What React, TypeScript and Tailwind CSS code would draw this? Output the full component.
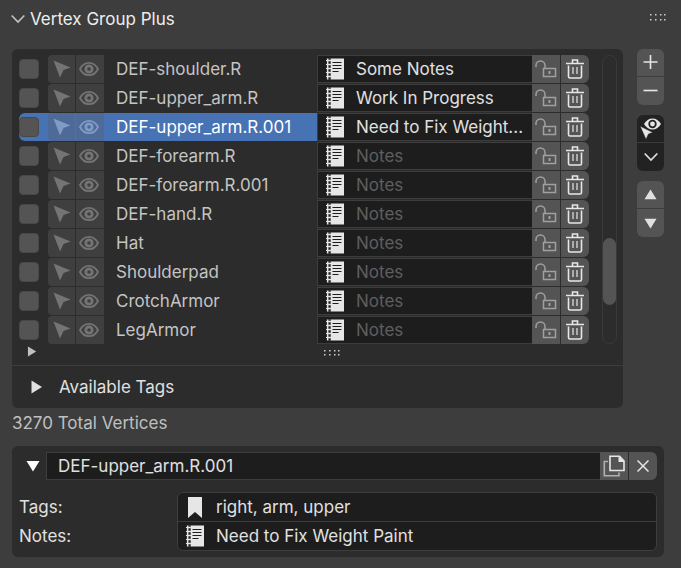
import { useState } from "react";

type Group = { name: string; notes: string };

const GROUPS: Group[] = [
  { name: "DEF-shoulder.R", notes: "Some Notes" },
  { name: "DEF-upper_arm.R", notes: "Work In Progress" },
  { name: "DEF-upper_arm.R.001", notes: "Need to Fix Weight..." },
  { name: "DEF-forearm.R", notes: "" },
  { name: "DEF-forearm.R.001", notes: "" },
  { name: "DEF-hand.R", notes: "" },
  { name: "Hat", notes: "" },
  { name: "Shoulderpad", notes: "" },
  { name: "CrotchArmor", notes: "" },
  { name: "LegArmor", notes: "" },
];

function CursorIcon() {
  return (
    <svg width="18" height="18" viewBox="0 0 18 18" fill="currentColor" aria-hidden="true">
      <path d="M0.500 0.500 17.500 7.500 10.500 10 7 17.500Z" />
    </svg>
  );
}

function EyeIcon() {
  return (
    <svg width="20" height="16" viewBox="0 0 20 16" fill="none" stroke="currentColor" aria-hidden="true">
      <path d="M1 8C3 4 6.300 1.800 10 1.800S17 4 19 8C17 12 13.700 14.200 10 14.200S3 12 1 8Z" strokeWidth="1.800" />
      <circle cx="10" cy="8" r="3.200" strokeWidth="2.800" />
    </svg>
  );
}

function NotesIcon() {
  return (
    <svg className="shrink-0" width="18" height="22" viewBox="0 0 18 22" fill="#e6e6e6" aria-hidden="true">
      <path d="M4.500 0.500H18V21.500H4.500Z" />
      <path d="M1.500 0.500V21.500" stroke="#e6e6e6" strokeWidth="1.200" />
      <path
        d="M0 2.500H5M0 6.500H5M0 10.500H5M0 14.500H5M0 18.500H5M3 0.500V21.500"
        stroke="#e6e6e6"
        strokeWidth="1.200"
        strokeDasharray="none"
      />
      <path d="M3.500 3.500V5.500M3.500 7.500V9.500M3.500 11.500V13.500M3.500 15.500V17.500M3.500 19.500V21.500M3.500 0.500V1.500" stroke="#1d1d1d" strokeWidth="1.600" />
      <path d="M6.500 4.500H15.500M6.500 7.500H15.500M6.500 10.500H15.500M6.500 13.500H12.500" stroke="#1d1d1d" strokeWidth="1.200" />
    </svg>
  );
}

function UnlockIcon() {
  return (
    <svg width="22" height="18" viewBox="0 0 22 18" fill="none" stroke="currentColor" aria-hidden="true">
      <path d="M1 7V5.500A4.500 4.500 0 0 1 10 5.500V8.500" strokeWidth="1.500" />
      <path d="M8.500 8.500H20.500V16.500H8.500Z" strokeWidth="1.500" />
      <path d="M14.500 11V14" strokeWidth="2" />
    </svg>
  );
}

function TrashIcon() {
  return (
    <svg width="18" height="20" viewBox="0 0 18 20" fill="none" stroke="currentColor" strokeWidth="1.600" aria-hidden="true">
      <path d="M0 4.500H18M6.500 4V1H11.500V4" />
      <path d="M2.500 6.500V17.500Q2.500 19 4 19H14Q15.500 19 15.500 17.500V6.500" />
      <path d="M7 8V15M11 8V15" strokeWidth="1.200" />
    </svg>
  );
}

function VisibleCursorIcon() {
  return (
    <svg width="22" height="23" viewBox="0 0 22 23" fill="none" aria-hidden="true">
      <path d="M4 7C6 3.500 9 1.500 12.500 1.500S19 3.500 21 7C19 10.500 16 12.500 12.500 12.500S6 10.500 4 7Z" fill="#e6e6e6" />
      <circle cx="12.500" cy="7" r="4.200" fill="#222222" />
      <circle cx="12.500" cy="7" r="2.400" fill="#e6e6e6" />
      <path d="M0 9 13 15.500 8.500 17 6 22.500Z" fill="#e6e6e6" stroke="#222222" strokeWidth="0.600" />
    </svg>
  );
}

function Triangle({ points, size }: { points: string; size: number }) {
  return (
    <svg width={size} height={size} viewBox="0 0 14 14" fill="currentColor" aria-hidden="true">
      <polygon points={points} />
    </svg>
  );
}

const RIGHT = "2.500,0.500 13,7 2.500,13.500";
const DOWN = "0.500,2 13.500,2 7,12.500";
const UP = "0.500,12 13.500,12 7,1.500";

function Chevron() {
  return (
    <svg width="14" height="10" viewBox="0 0 14 10" fill="none" stroke="currentColor" strokeWidth="1.700" aria-hidden="true">
      <path d="M0.700 1.500 7 8 13.300 1.500" />
    </svg>
  );
}

function Grip({ height }: { height: number }) {
  return (
    <svg width="16" height={height} viewBox={`0 0 16 ${height}`} fill="#d0d0d0" aria-hidden="true">
      {[0, 5, 10, 14].map((x) => (
        <g key={x}>
          <rect x={x} y="0" width="1.500" height="1.500" />
          <rect x={x} y={height - 2} width="1.500" height="1.500" />
        </g>
      ))}
    </svg>
  );
}

function GroupRow({ group, active }: { group: Group; active: boolean }) {
  return (
    <li className="flex h-7">
      <div className={`flex min-w-0 flex-1 items-center rounded-l-md ${active ? "bg-[#4772b3]" : ""}`}>
        <input
          type="checkbox"
          aria-label={`Select ${group.name}`}
          className="size-5 shrink-0 appearance-none rounded border border-[#484848] bg-[#545454] checked:bg-[#4772b3]"
        />
        <div className={`ml-[9px] flex h-full shrink-0 gap-px ${active ? "text-[#819bc2]" : "text-[#747474]"}`}>
          <button
            type="button"
            aria-label="Select vertices"
            className={`flex w-[27px] items-center justify-center rounded-l ${active ? "bg-[#4d6a98]" : "bg-[#3f3f3f]"}`}
          >
            <CursorIcon />
          </button>
          <button
            type="button"
            aria-label="Toggle visibility"
            className={`flex w-7 items-center justify-center pr-0.5 ${active ? "bg-[#4d6a98]" : "bg-[#3f3f3f]"}`}
          >
            <EyeIcon />
          </button>
        </div>
        <span className={`ml-3 truncate ${active ? "text-white" : "text-[#c4c4c4]"}`}>{group.name}</span>
      </div>
      <label className="flex w-[215px] shrink-0 items-center border border-r-0 border-[#3d3d3d] bg-[#1d1d1d] pl-2">
        <NotesIcon />
        <input
          type="text"
          aria-label={`Notes for ${group.name}`}
          placeholder="Notes"
          defaultValue={group.notes}
          className="ml-3 w-full min-w-0 bg-transparent text-[#e0e0e0] outline-none placeholder:text-[#5f5f5f]"
        />
      </label>
      <button type="button" aria-label="Lock" className="flex w-7 items-center justify-center bg-[#545454] text-[#a0a0a0]">
        <UnlockIcon />
      </button>
      <button
        type="button"
        aria-label="Delete"
        className="ml-px flex w-7 items-center justify-center rounded-r-md bg-[#545454] text-[#e6e6e6]"
      >
        <TrashIcon />
      </button>
    </li>
  );
}

export default function App() {
  const [open, setOpen] = useState(true);

  return (
    <main className="min-h-screen bg-[#3d3d3d] pr-[17px] pb-[11px] pl-3 font-['Inter','Noto_Sans',sans-serif] text-[17px] leading-5 text-[#e0e0e0]">
      <header className="flex h-[49px] items-start justify-between pt-2">
        <button type="button" onClick={() => setOpen(!open)} className="-ml-px flex items-center gap-[5px] pt-px text-[#ededed]">
          <span className="text-[#c0c0c0]">
            <Chevron />
          </span>
          <h1>Vertex Group Plus</h1>
        </button>
        <span className="-mr-0.5 pt-1.5">
          <Grip height={7} />
        </span>
      </header>

      {open && (
        <>
          <div className="flex gap-3.5">
            <section className="min-w-0 flex-1 rounded-md bg-[#2c2c2c]">
              <div className="flex justify-between pt-1.5 pr-1.5 pl-[7px]">
                <ul className="flex min-w-0 flex-1 flex-col gap-px">
                  {GROUPS.map((group) => (
                    <GroupRow key={group.name} group={group} active={group.name === "DEF-upper_arm.R.001"} />
                  ))}
                </ul>
                <div className="ml-[13px] w-[15px] rounded-full border border-[#3a3a3a] pt-[182px]">
                  <div className="h-[67px] rounded-full bg-[#545454]" />
                </div>
              </div>
              <div className="grid h-[21px] grid-cols-[1fr_auto_1fr] items-start pt-0.5 pl-3.5">
                <button type="button" aria-label="Show filters" className="w-3 text-[#c0c0c0]">
                  <Triangle points={RIGHT} size={11} />
                </button>
                <span className="pt-1 pl-3.5">
                  <Grip height={6} />
                </span>
              </div>
              <button
                type="button"
                className="flex h-[43px] w-full items-center gap-4 border-t border-[#3d3d3d] pl-[17px]"
              >
                <Triangle points={RIGHT} size={14} />
                <span>Available Tags</span>
              </button>
            </section>

            <aside className="flex w-[27px] flex-col">
              <button type="button" aria-label="Add" className="flex h-[27px] items-center justify-center rounded-t-md bg-[#545454]">
                <svg width="15" height="15" viewBox="0 0 15 15" stroke="#e6e6e6" strokeWidth="1.600" aria-hidden="true">
                  <path d="M0.500 7H14.500M7.500 0V14" />
                </svg>
              </button>
              <button type="button" aria-label="Remove" className="mt-px flex h-7 items-center justify-center rounded-b-md bg-[#545454]">
                <svg width="15" height="14" viewBox="0 0 15 14" stroke="#e6e6e6" strokeWidth="1.600" aria-hidden="true">
                  <path d="M0.500 6.500H14.500" />
                </svg>
              </button>
              <button type="button" aria-label="Visibility tools" className="mt-2.5 flex h-[27px] items-center justify-center rounded-t-md bg-[#222222]">
                <VisibleCursorIcon />
              </button>
              <button type="button" aria-label="More" className="mt-px flex h-7 items-center justify-center rounded-b-md bg-[#222222]">
                <Chevron />
              </button>
              <button type="button" aria-label="Move up" className="mt-2.5 flex h-[27px] items-center justify-center rounded-t-md bg-[#545454]">
                <Triangle points={UP} size={13} />
              </button>
              <button type="button" aria-label="Move down" className="mt-px flex h-7 items-center justify-center rounded-b-md bg-[#545454]">
                <Triangle points={DOWN} size={13} />
              </button>
            </aside>
          </div>

          <p className="pt-[5px] pb-[13px] text-[#c0c0c0]">3270 Total Vertices</p>

          <section className="rounded-md bg-[#2c2c2c] px-[7px] py-1.5">
            <div className="flex h-7">
              <button type="button" aria-label="Collapse" className="flex w-[27px] shrink-0 items-center justify-center text-white">
                <Triangle points={DOWN} size={14} />
              </button>
              <input
                type="text"
                aria-label="Group name"
                defaultValue="DEF-upper_arm.R.001"
                className="min-w-0 flex-1 border border-r-0 border-[#3d3d3d] bg-[#1d1d1d] pl-[11px] outline-none"
              />
              <button type="button" aria-label="Copy" className="flex w-7 items-center justify-center bg-[#545454]">
                <svg width="22" height="22" viewBox="0 0 22 22" fill="none" stroke="#e6e6e6" strokeWidth="1.600" aria-hidden="true">
                  <path d="M7 1.300H16.500L21 6V15.500H7Z" />
                  <path d="M15.500 1V7H21.500Z" fill="#e6e6e6" stroke="none" />
                  <path d="M5 6.500H1.300V20.700H16V17.500" stroke="#b0b0b0" />
                </svg>
              </button>
              <button type="button" aria-label="Close" className="ml-px flex w-7 items-center justify-center rounded-r-md bg-[#545454]">
                <svg width="12" height="12" viewBox="0 0 12 12" stroke="#e6e6e6" strokeWidth="1.500" aria-hidden="true">
                  <path d="M0.500 0.500 11.500 11.500M11.500 0.500 0.500 11.500" />
                </svg>
              </button>
            </div>

            <div className="mt-3 grid grid-cols-[158px_1fr]">
              <div className="flex flex-col">
                <label htmlFor="tags" className="flex h-[29px] items-center">
                  Tags:
                </label>
                <label htmlFor="notes" className="flex h-[29px] items-center">
                  Notes:
                </label>
              </div>
              <div className="divide-y divide-[#3d3d3d] rounded-md border border-[#3d3d3d] bg-[#1d1d1d]">
                <div className="flex h-[29px] items-center pl-2">
                  <svg className="shrink-0" width="18" height="22" viewBox="0 0 18 22" fill="#e6e6e6" aria-hidden="true">
                    <path d="M2 1H16V22L9 16 2 22Z" />
                  </svg>
                  <input id="tags" type="text" defaultValue="right, arm, upper" className="ml-3 min-w-0 flex-1 bg-transparent outline-none" />
                </div>
                <div className="flex h-7 items-center pl-2">
                  <NotesIcon />
                  <input id="notes" type="text" defaultValue="Need to Fix Weight Paint" className="ml-3 min-w-0 flex-1 bg-transparent outline-none" />
                </div>
              </div>
            </div>
          </section>
        </>
      )}
    </main>
  );
}
